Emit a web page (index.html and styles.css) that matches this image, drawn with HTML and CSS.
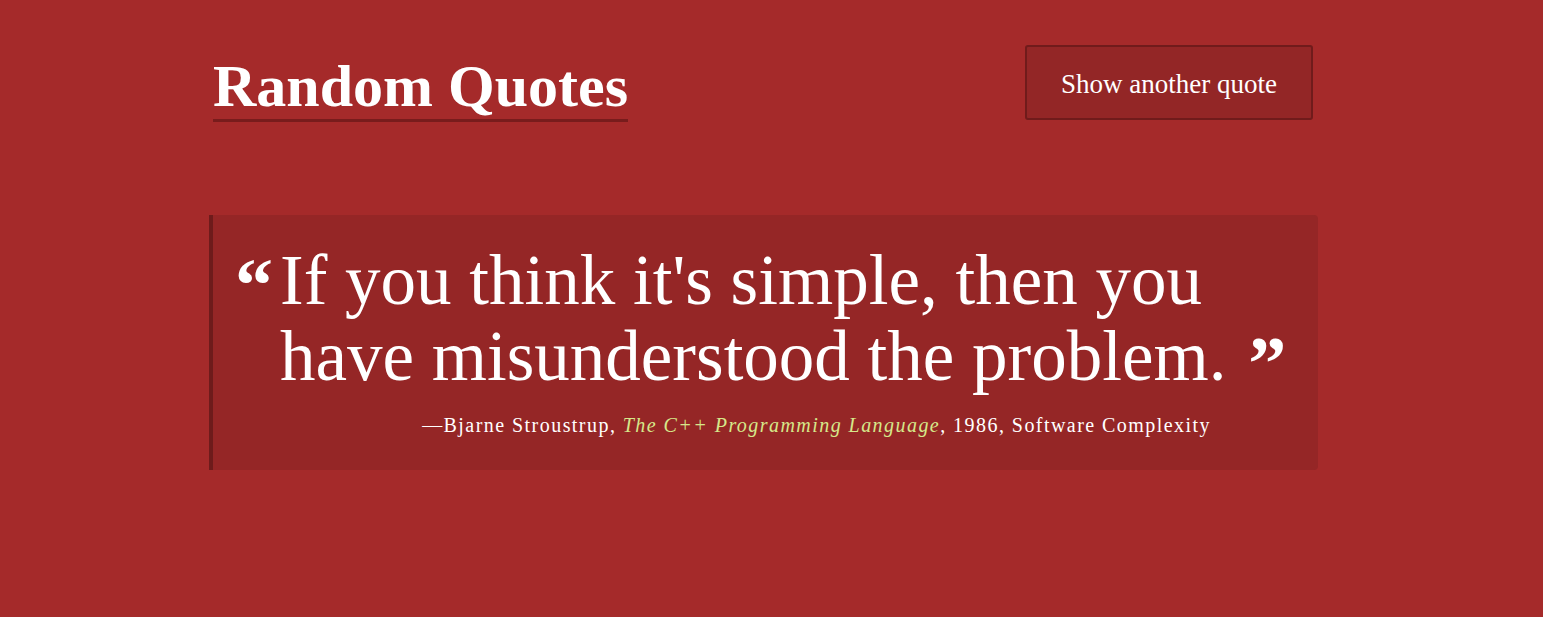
FILE: index.html
```html
<!DOCTYPE html>
<html lang="en">
<head>
<meta charset="utf-8">
<title>Random Quotes</title>
<link rel="stylesheet" href="styles.css">
</head>
<body>
<div class="page">
  <header class="header">
    <h1 class="title">Random Quotes</h1>
    <button class="btn" type="button">Show another quote</button>
  </header>
  <blockquote class="quote">
    <p class="quote-text"><span class="mark open">&#8220;</span>If you think it's simple, then you have misunderstood the problem. <span class="mark close">&#8221;</span></p>
    <footer class="cite">&mdash;Bjarne Stroustrup, <cite class="source">The C++ Programming Language</cite>, 1986, Software Complexity</footer>
  </blockquote>
</div>
</body>
</html>
```
FILE: styles.css
```css
html, body {
  margin: 0;
  padding: 0;
}
body {
  background: #a52a2a;
  color: #ffffff;
  font-family: "Liberation Serif", "Times New Roman", serif;
  min-height: 617px;
}
.page {
  width: 1109px;
  margin: 0 auto;
  padding: 45px 16px 0 0;
  box-sizing: content-box;
}
.header {
  display: flex;
  justify-content: space-between;
  align-items: flex-end;
  padding: 0 5px 0 4px;
}
.title {
  margin: 0;
  font-size: 60px;
  font-weight: 700;
  line-height: 66px;
  border-bottom: 3px solid #781c1c;
  display: inline-block;
  margin-bottom: -1px;
}
.btn {
  height: 75px;
  width: 288px;
  box-sizing: border-box;
  background: #932626;
  border: 2px solid #701b1b;
  border-radius: 3px;
  color: #ffffff;
  font-family: "Liberation Serif", "Times New Roman", serif;
  font-size: 27px;
  padding: 3px 0 0 0;
  margin-bottom: 1px;
}
.quote {
  margin: 94px 0 0 0;
  background: #952626;
  border-left: 4px solid #6e1b1b;
  border-radius: 0 4px 4px 0;
  padding: 27px 20px 31px 22px;
}
.quote-text {
  margin: 0;
  font-size: 71px;
  line-height: 76px;
  padding-left: 45px;
  text-indent: -45px;
}
.mark {
  font-weight: 700;
  font-size: 76px;
  line-height: 0;
}
.open {
  display: inline-block;
  width: 45px;
  text-indent: 0;
  vertical-align: -7px;
}
.close {
  margin-left: 4px;
  vertical-align: -9px;
}
.cite {
  margin-top: 17px;
  font-size: 20px;
  line-height: 28px;
  letter-spacing: 1.45px;
  text-align: right;
  padding-right: 87px;
}
.source {
  font-style: italic;
  color: #d6e88a;
}
```
